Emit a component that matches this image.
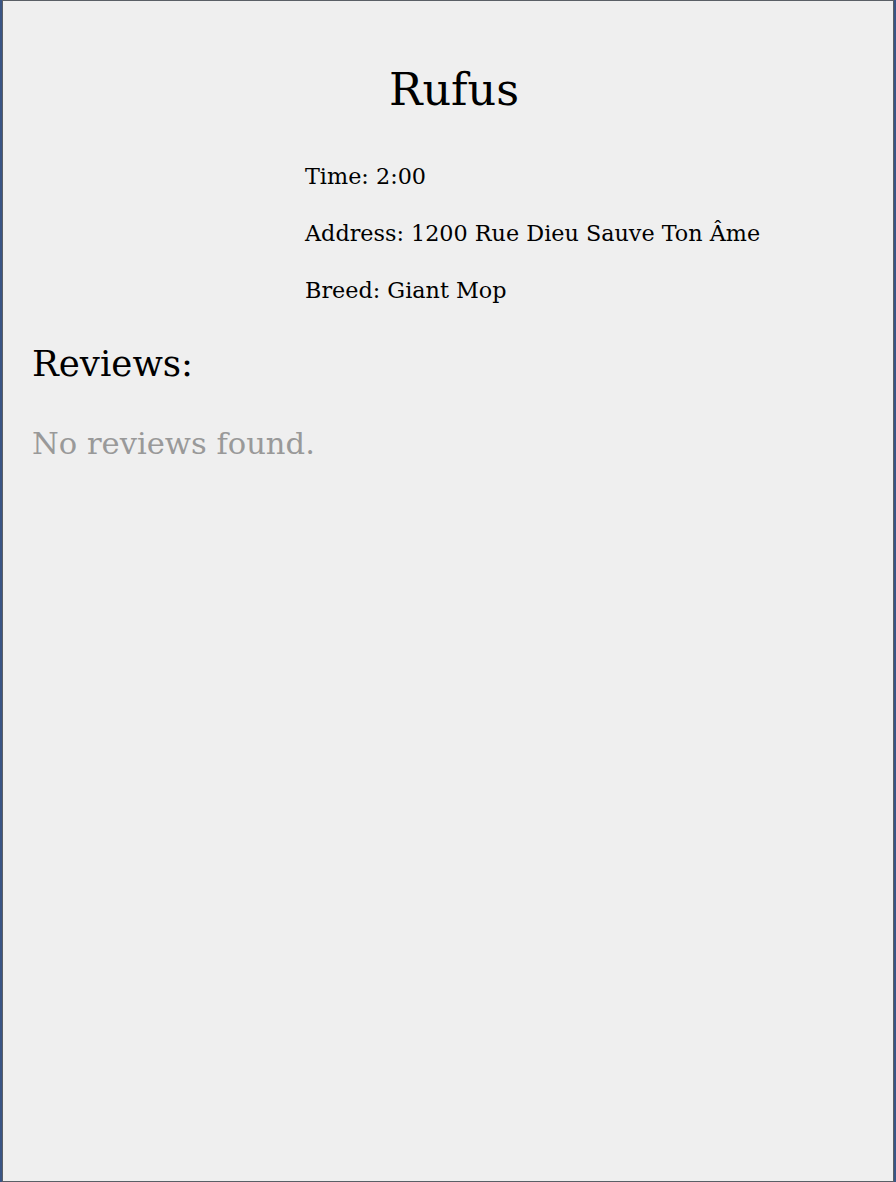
import React from 'react';

const details = [
  { label: 'Time', value: '2:00' },
  { label: 'Address', value: '1200 Rue Dieu Sauve Ton Âme' },
  { label: 'Breed', value: 'Giant Mop' },
];

const App: React.FC = () => {
  return (
    <div className="h-[1182px] bg-[#3a5585] px-[2px]">
      <div
        className="h-full border border-[#5a5f66] bg-[#efefef] text-black"
        style={{ fontFamily: '"DejaVu Serif", serif' }}
      >
        <h1 className="pt-[61px] pl-[12px] text-center text-[44.5px] leading-[56px]">Rufus</h1>

        <div className="mt-[43px] pl-[302px]">
          {details.map(d => (
            <p key={d.label} className="mb-[27px] text-[22.3px] leading-[30px]">
              {d.label}: {d.value}
            </p>
          ))}
        </div>

        <div className="px-[29px]">
          <h2 className="mt-[37px] text-[35.6px] leading-[44px]">Reviews:</h2>
          <p className="mt-[38px] text-[30.6px] leading-[40px] text-[#999999]">No reviews found.</p>
        </div>
      </div>
    </div>
  );
};

export default App;
